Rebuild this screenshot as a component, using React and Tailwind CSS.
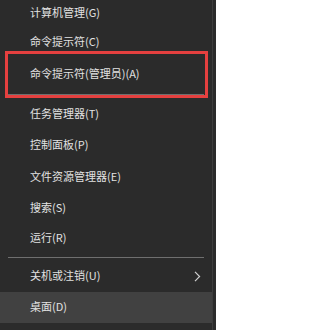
import React from "react";

const Item = ({ label, h, hl, arrow }) => (
  <div
    className={`flex items-center pl-[30px] pr-[9px] text-[11px] leading-none text-[#e2e2e2] ${hl ? "bg-[#414141]" : ""}`}
    style={{ height: h }}
  >
    <span className="flex-1 -translate-y-[1px]">{label}</span>
    {arrow && (
      <svg width="7" height="11" viewBox="0 0 7 11" className="mr-[2px]">
        <path d="M1 0.8 L5.6 5.5 L1 10.2" fill="none" stroke="#d0d0d0" strokeWidth="1.2" />
      </svg>
    )}
  </div>
);

const Sep = ({ h }) => (
  <div className="flex items-center px-[8px]" style={{ height: h }}>
    <div className="h-px w-full bg-[#6f6f6f]" />
  </div>
);

export default function App() {
  return (
    <div className="relative h-[330px] w-[216px] overflow-hidden bg-[#2b2b2b] [font-family:'Noto_Sans_CJK_SC','Noto_Sans',sans-serif]">
      <div className="h-full w-[213px] border-r border-[#3d3d3d]">
        <Item label="计算机管理(G)" h={27} />
        <Item label="命令提示符(C)" h={31} />
        <Item label="命令提示符(管理员)(A)" h={32} />
        <Sep h={8} />
        <Item label="任务管理器(T)" h={32} />
        <Item label="控制面板(P)" h={31} />
        <Item label="文件资源管理器(E)" h={32} />
        <Item label="搜索(S)" h={31} />
        <Item label="运行(R)" h={29} />
        <Sep h={8} />
        <Item label="关机或注销(U)" h={31} arrow />
        <Item label="桌面(D)" h={31} hl />
      </div>
      <div className="absolute left-[5px] top-[51px] h-[47px] w-[203px] border-[3px] border-[#e5403f]" />
    </div>
  );
}
